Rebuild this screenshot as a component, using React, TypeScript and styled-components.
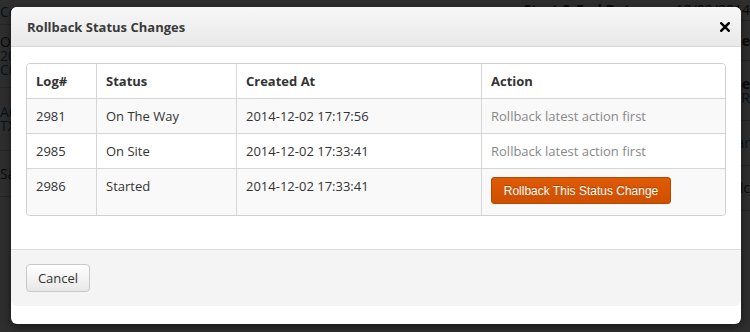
import React from 'react';
import styled, { createGlobalStyle } from 'styled-components';

const GlobalStyle = createGlobalStyle`
  html, body {
    margin: 0;
    padding: 0;
    width: 750px;
    height: 332px;
    overflow: hidden;
    background: #2a2a2a;
    font-family: "Open Sans", "DejaVu Sans", sans-serif;
  }
`;

const StyledPage = styled.div`
  position: relative;
  width: 750px;
  height: 332px;
  overflow: hidden;
  background: #fff;
`;

const StyledBackdropContent = styled.div`
  display: flex;
  justify-content: space-between;
  height: 100%;
  font-size: 14px;
  color: #333;
`;

const StyledSideColumn = styled.div`
  display: flex;
  flex-direction: column;
  width: 70px;
`;

const StyledRightColumn = styled(StyledSideColumn)`
  width: 200px;
  align-items: flex-end;
`;

const StyledBackdropRow = styled.div<{ $height: number; $align?: 'flex-start' | 'flex-end' }>`
  height: ${({ $height }) => $height}px;
  width: 100%;
  box-sizing: border-box;
  border-bottom: 1px solid #ccc;
  display: flex;
  flex-direction: column;
  justify-content: center;
  align-items: ${({ $align }) => $align || 'flex-start'};
  overflow: hidden;
`;

const StyledBackdropLine = styled.span<{ $link?: boolean; $bold?: boolean }>`
  display: block;
  line-height: 14px;
  white-space: nowrap;
  color: ${({ $link }) => ($link ? '#2a6496' : '#333')};
  font-weight: ${({ $bold }) => ($bold ? 'bold' : 'normal')};
`;

const StyledHeadingRow = styled.div`
  display: flex;
  gap: 30px;
  width: 100%;
  height: 20px;
  align-items: center;
  justify-content: flex-end;
  font-size: 14px;
  border-bottom: 1px solid #ccc;
  white-space: nowrap;
`;

const StyledOverlay = styled.div`
  position: absolute;
  inset: 0;
  background: rgba(0, 0, 0, 0.82);
`;

const StyledModal = styled.div`
  position: absolute;
  top: 7px;
  left: 11px;
  width: 730px;
  height: 317px;
  background: #fff;
  border-radius: 6px;
  box-shadow: 0 3px 9px rgba(0, 0, 0, 0.5);
  display: flex;
  flex-direction: column;
  overflow: hidden;
`;

const StyledHeader = styled.div`
  height: 40px;
  box-sizing: border-box;
  display: flex;
  align-items: center;
  justify-content: space-between;
  padding: 0 10px 0 16px;
  background: linear-gradient(#f7f7f7, #e9e9e9);
  border-bottom: 1px solid #d8d8d8;
`;

const StyledTitle = styled.div`
  font-size: 13px;
  font-weight: bold;
  color: #3a3a3a;
`;

const StyledClose = styled.button`
  border: none;
  background: none;
  padding: 0;
  width: 12px;
  height: 12px;
  display: flex;
  align-items: center;
  justify-content: center;
  cursor: pointer;
`;

const StyledBody = styled.div`
  padding: 16px 15px 33px;
`;

const StyledTable = styled.div`
  display: grid;
  grid-template-columns: 69px 140px 245px 1fr;
  border: 1px solid #cfcfcf;
  border-radius: 4px;
  overflow: hidden;
  font-size: 13px;
  color: #333;
`;

const StyledCell = styled.div<{ $head?: boolean; $odd?: boolean; $muted?: boolean; $tall?: boolean; $first?: boolean }>`
  box-sizing: border-box;
  height: ${({ $tall, $head }) => ($tall ? 47 : $head ? 34 : 35)}px;
  padding: ${({ $tall }) => ($tall ? '8px 9px' : '0 9px')};
  display: flex;
  align-items: ${({ $tall }) => ($tall ? 'flex-start' : 'center')};
  font-weight: ${({ $head }) => ($head ? 'bold' : 'normal')};
  color: ${({ $muted }) => ($muted ? '#888' : '#333')};
  background: ${({ $odd }) => ($odd ? '#f9f9f9' : '#fff')};
  border-top: ${({ $head }) => ($head ? 'none' : '1px solid #d6d6d6')};
  border-left: ${({ $first }) => ($first ? 'none' : '1px solid #d6d6d6')};
  white-space: nowrap;
`;

const StyledTallText = styled.span`
  line-height: 18px;
`;

const StyledRollbackButton = styled.button`
  height: 27px;
  width: 180px;
  border: 1px solid #b54700;
  border-radius: 3px;
  background: linear-gradient(#df5a05, #cf5000);
  color: #fff;
  font-family: "Liberation Sans", Arial, sans-serif;
  font-size: 12px;
  text-shadow: 0 -1px 0 rgba(0, 0, 0, 0.25);
  cursor: pointer;
`;

const StyledFooter = styled.div`
  border-top: 1px solid #dcdcdc;
  background: #f4f4f4;
  border-radius: 0 0 6px 6px;
  padding: 14px 15px 14px;
`;

const StyledCancel = styled.button`
  height: 28px;
  width: 64px;
  border: 1px solid #c8c8c8;
  border-radius: 4px;
  background: linear-gradient(#ffffff, #e8e8e8);
  color: #333;
  font-family: "Open Sans", "DejaVu Sans", sans-serif;
  font-size: 13px;
  cursor: pointer;
`;

interface LogRow {
  log: string;
  status: string;
  createdAt: string;
  canRollback: boolean;
}

const rows: LogRow[] = [
  { log: '2981', status: 'On The Way', createdAt: '2014-12-02 17:17:56', canRollback: false },
  { log: '2985', status: 'On Site', createdAt: '2014-12-02 17:33:41', canRollback: false },
  { log: '2986', status: 'Started', createdAt: '2014-12-02 17:33:41', canRollback: true },
];

const headers = ['Log#', 'Status', 'Created At', 'Action'];

const CloseIcon = () => (
  <svg width="10" height="10" viewBox="0 0 10 10">
    <path d="M1.3 1.3 L8.7 8.7 M8.7 1.3 L1.3 8.7" stroke="#000" strokeWidth="2.5" strokeLinecap="square" />
  </svg>
);

const App = () => {
  return (
    <StyledPage>
      <GlobalStyle />
      <StyledBackdropContent>
        <StyledSideColumn>
          <StyledBackdropRow $height={25}>
            <StyledBackdropLine $link>Corporation</StyledBackdropLine>
          </StyledBackdropRow>
          <StyledBackdropRow $height={63}>
            <StyledBackdropLine>Order</StyledBackdropLine>
            <StyledBackdropLine $link>2015-1</StyledBackdropLine>
            <StyledBackdropLine $link>Custo</StyledBackdropLine>
          </StyledBackdropRow>
          <StyledBackdropRow $height={63}>
            <StyledBackdropLine $link>Austin</StyledBackdropLine>
            <StyledBackdropLine $link>TX 7</StyledBackdropLine>
          </StyledBackdropRow>
          <StyledBackdropRow $height={46}>
            <StyledBackdropLine>Sale.</StyledBackdropLine>
          </StyledBackdropRow>
        </StyledSideColumn>
        <StyledRightColumn>
          <StyledHeadingRow>
            <StyledBackdropLine $bold>Start &amp; End Dates</StyledBackdropLine>
            <StyledBackdropLine>12/02/2014</StyledBackdropLine>
          </StyledHeadingRow>
          <StyledBackdropRow $height={40} $align="flex-end">
            <StyledBackdropLine $bold>Se</StyledBackdropLine>
          </StyledBackdropRow>
          <StyledBackdropRow $height={60} $align="flex-end">
            <StyledBackdropLine $bold>Se</StyledBackdropLine>
            <StyledBackdropLine $link>R</StyledBackdropLine>
          </StyledBackdropRow>
          <StyledBackdropRow $height={45} $align="flex-end">
            <StyledBackdropLine $link>ar</StyledBackdropLine>
          </StyledBackdropRow>
          <StyledBackdropRow $height={45} $align="flex-end">
            <StyledBackdropLine>lc</StyledBackdropLine>
          </StyledBackdropRow>
        </StyledRightColumn>
      </StyledBackdropContent>
      <StyledOverlay />

      <StyledModal>
        <StyledHeader>
          <StyledTitle>Rollback Status Changes</StyledTitle>
          <StyledClose aria-label="Close">
            <CloseIcon />
          </StyledClose>
        </StyledHeader>
        <StyledBody>
          <StyledTable>
            {headers.map((h, i) => (
              <StyledCell key={h} $head $first={i === 0}>
                {h}
              </StyledCell>
            ))}
            {rows.map((row, r) => {
              const odd = r % 2 === 0;
              const tall = row.canRollback;
              return (
                <React.Fragment key={row.log}>
                  <StyledCell $odd={odd} $tall={tall} $first>
                    {tall ? <StyledTallText>{row.log}</StyledTallText> : row.log}
                  </StyledCell>
                  <StyledCell $odd={odd} $tall={tall}>
                    {tall ? <StyledTallText>{row.status}</StyledTallText> : row.status}
                  </StyledCell>
                  <StyledCell $odd={odd} $tall={tall}>
                    {tall ? <StyledTallText>{row.createdAt}</StyledTallText> : row.createdAt}
                  </StyledCell>
                  <StyledCell $odd={odd} $tall={tall} $muted={!row.canRollback}>
                    {row.canRollback ? (
                      <StyledRollbackButton>Rollback This Status Change</StyledRollbackButton>
                    ) : (
                      'Rollback latest action first'
                    )}
                  </StyledCell>
                </React.Fragment>
              );
            })}
          </StyledTable>
        </StyledBody>
        <StyledFooter>
          <StyledCancel>Cancel</StyledCancel>
        </StyledFooter>
      </StyledModal>
    </StyledPage>
  );
};

export default App;
